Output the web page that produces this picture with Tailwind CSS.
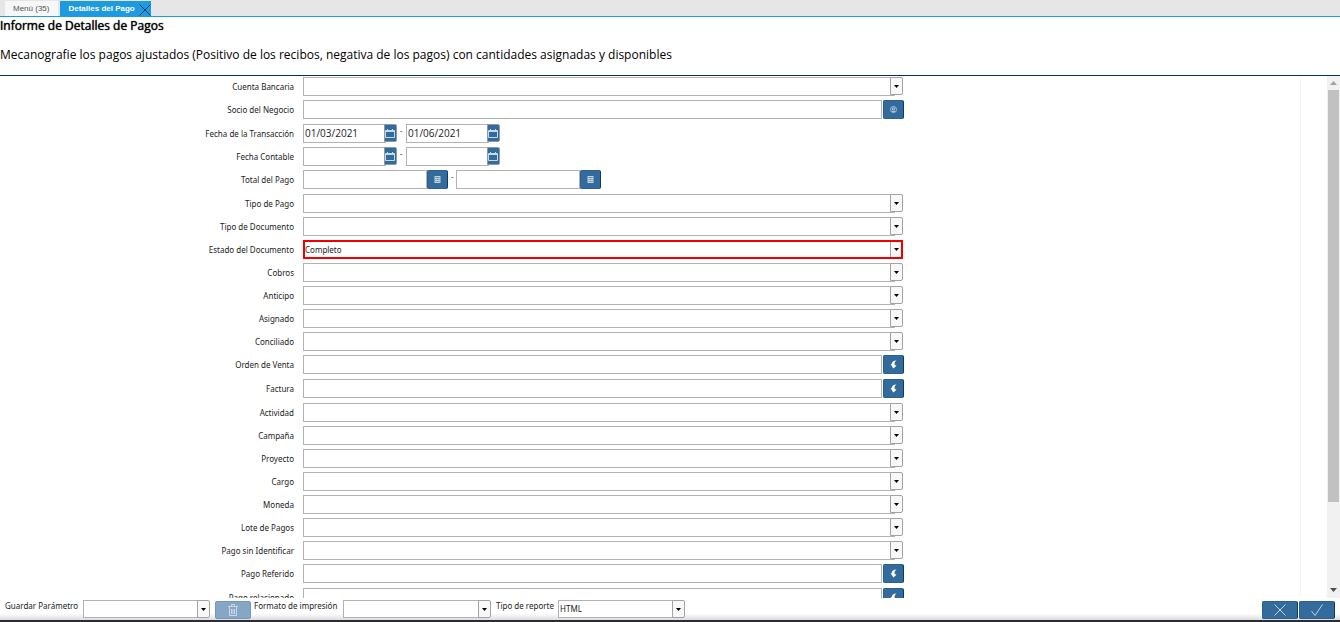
<!DOCTYPE html>
<html lang="es">
<head>
  <meta charset="UTF-8" />
  <meta name="viewport" content="width=device-width, initial-scale=1.0" />
  <title>Informe de Detalles de Pagos</title>
  <script src="https://cdn.jsdelivr.net/npm/@tailwindcss/browser@4"></script>
</head>
<body class="h-screen flex flex-col overflow-hidden bg-white text-black font-['Open_Sans',sans-serif]">
  <!-- Iconos -->
  <svg class="hidden">
    <symbol id="i-x" viewBox="0 0 12 12"><path d="M.5.5l11 11M11.5.5l-11 11" fill="none" stroke="currentColor" /></symbol>
    <symbol id="i-check" viewBox="0 0 12 12"><path d="M.5 7l3.500 4.500L11.500.5" fill="none" stroke="currentColor" /></symbol>
    <symbol id="i-flecha" viewBox="0 0 5 3"><path d="M0 0h5L2.500 3z" fill="currentColor" /></symbol>
    <symbol id="i-fecha" viewBox="0 0 11 11"><path d="M.5 2.500h9v7h-9zM.5 3.500h9M2.500 1v2M7.500 1v2" fill="none" stroke="currentColor" /></symbol>
    <symbol id="i-calc" viewBox="0 0 7 9"><path d="M.5 1h6v7h-6z" fill="currentColor" /><path d="M1.500 2.500h4M1.500 4.500h1M3 4.500h1M4.500 4.500h1M1.500 6.500h1M3 6.500h1M4.500 6.500h1" stroke="#336b9c" stroke-width=".7" /></symbol>
    <symbol id="i-socio" viewBox="0 0 7 9"><circle cx="3.500" cy="4.500" r="3" fill="none" stroke="currentColor" /><path d="M2.500 3h2v2h-2zM2 6.500h3" fill="none" stroke="currentColor" /></symbol>
    <symbol id="i-buscar" viewBox="0 0 7 9"><path d="M6.500.5C3.500.5 1.700 2 1.700 4.200L.5 4.300 3.400 8.500 6.500 5.800 4.700 5C4.200 3.300 4.800 1.700 6.500.5z" fill="currentColor" /></symbol>
    <symbol id="i-borrar" viewBox="0 0 10 12"><path d="M0 2.500h10M3.500 2V.5h3V2M1.500 3v8.500h7V3M3.500 5v5M5 5v5M6.500 5v5" fill="none" stroke="currentColor" /></symbol>
  </svg>

  <!-- Pestañas -->
  <nav class="h-[17px] shrink-0 flex items-end gap-0.5 pl-[5px] bg-[#e6e6e6] border-b border-[#1e9be0] font-['Liberation_Sans',sans-serif] text-[8px] leading-[15px]">
    <a href="#" class="h-[15px] pl-2 pr-[9px] bg-[#f7f7f7] text-[#555]">Menú (35)</a>
    <a href="#" class="h-[15px] pl-2 flex items-center gap-1 bg-[#1e9be0] text-white font-bold">Detalles del Pago
      <svg class="size-3 mt-0.5 text-[#0c3a66]"><use href="#i-x" /></svg>
    </a>
  </nav>

  <!-- Encabezado -->
  <header class="h-[59px] shrink-0 border-b border-[#03305c] text-[12px] leading-[17px]">
    <h1 class="font-medium [text-shadow:0_0_1px_#000]">Informe de Detalles de Pagos</h1>
    <p class="mt-3">Mecanografie los pagos ajustados (Positivo de los recibos, negativa de los pagos) con cantidades asignadas y disponibles</p>
  </header>

  <!-- Parámetros -->
  <main class="flex-1 min-h-0 flex">
    <form class="flex-1 overflow-y-auto [scrollbar-width:none] pt-px">
      <div id="parametros" class="mr-[26px] border-r border-[#f5f5f5]"></div>
    </form>
    <div class="w-[13px] flex flex-col items-center bg-[#f1f1f1]">
      <svg class="w-[7px] h-[14px] shrink-0 text-[#a3a3a3]" viewBox="0 0 7 14"><path d="M0 9h7L3.500 5z" fill="currentColor" /></svg>
      <div class="w-[11px] h-[79%] bg-[#c1c1c1]"></div>
      <svg class="w-[7px] h-4 mt-auto text-[#505050]" viewBox="0 0 7 16"><path d="M0 6h7L3.500 10z" fill="currentColor" /></svg>
    </div>
  </main>

  <!-- Barra inferior -->
  <footer class="h-6 shrink-0 flex items-start pt-0.5 px-[5px] border-b-2 border-[#2c2c30] bg-linear-to-b from-white from-70% to-[#dcdcdc] font-['Noto_Sans',sans-serif] text-[8px] leading-3 text-[#222]">
    <label for="guardar" class="w-[78px] whitespace-nowrap">Guardar Parámetro</label>
    <div class="relative w-[127px]">
      <select id="guardar" class="block w-[115px] h-[18px] appearance-none bg-white border border-[#b3b3b3]"><option></option></select>
      <span class="absolute right-0 top-0 w-[13px] h-[18px] flex items-center justify-center bg-[#f8f8f8] border border-[#a3a3a3] rounded-r-xs pointer-events-none"><svg class="w-[5px] h-[3px] text-black"><use href="#i-flecha" /></svg></span>
    </div>
    <button type="button" aria-label="Borrar" disabled class="w-9 h-[18px] mt-px ml-[5px] flex items-center justify-center rounded-xs bg-[#85a6c4] border border-[#7297b8] text-[#c8d8e6]"><svg class="w-[10px] h-3"><use href="#i-borrar" /></svg></button>
    <label for="formato" class="w-[89px] ml-[3px] whitespace-nowrap">Formato de impresión</label>
    <div class="relative w-[148px]">
      <select id="formato" class="block w-[136px] h-[18px] appearance-none bg-white border border-[#b3b3b3]"><option></option></select>
      <span class="absolute right-0 top-0 w-[13px] h-[18px] flex items-center justify-center bg-[#f8f8f8] border border-[#a3a3a3] rounded-r-xs pointer-events-none"><svg class="w-[5px] h-[3px] text-black"><use href="#i-flecha" /></svg></span>
    </div>
    <label for="reporte" class="w-[62px] ml-[5px] whitespace-nowrap">Tipo de reporte</label>
    <div class="relative w-[127px]">
      <select id="reporte" class="block w-[115px] h-[18px] px-px appearance-none bg-white border border-[#b3b3b3]"><option>HTML</option></select>
      <span class="absolute right-0 top-0 w-[13px] h-[18px] flex items-center justify-center bg-[#f8f8f8] border border-[#a3a3a3] rounded-r-xs pointer-events-none"><svg class="w-[5px] h-[3px] text-black"><use href="#i-flecha" /></svg></span>
    </div>
    <div class="ml-auto mt-px flex gap-px text-[#c2d3e2]">
      <button type="button" aria-label="Cancelar" class="w-9 h-[18px] flex items-center justify-center rounded-xs bg-[#336b9c] border border-[#2a5f8f] border-r-[#0c3a66]"><svg class="size-3"><use href="#i-x" /></svg></button>
      <button type="button" aria-label="Aceptar" class="w-9 h-[18px] flex items-center justify-center rounded-xs bg-[#336b9c] border border-[#2a5f8f] border-r-[#0c3a66]"><svg class="size-3"><use href="#i-check" /></svg></button>
    </div>
  </footer>

  <script>
    const campos = [
      ['Cuenta Bancaria', 'lista'],
      ['Socio del Negocio', 'buscar', 'i-socio'],
      ['Fecha de la Transacción', 'fecha', '01/03/2021', '01/06/2021'],
      ['Fecha Contable', 'fecha', '', ''],
      ['Total del Pago', 'monto'],
      ['Tipo de Pago', 'lista'],
      ['Tipo de Documento', 'lista'],
      ['Estado del Documento', 'lista', 'Completo'],
      ['Cobros', 'lista'],
      ['Anticipo', 'lista'],
      ['Asignado', 'lista'],
      ['Conciliado', 'lista'],
      ['Orden de Venta', 'buscar', 'i-buscar'],
      ['Factura', 'buscar', 'i-buscar'],
      ['Actividad', 'lista'],
      ['Campaña', 'lista'],
      ['Proyecto', 'lista'],
      ['Cargo', 'lista'],
      ['Moneda', 'lista'],
      ['Lote de Pagos', 'lista'],
      ['Pago sin Identificar', 'lista'],
      ['Pago Referido', 'buscar', 'i-buscar'],
      ['Pago relacionado', 'buscar', 'i-buscar']
    ];

    function lista(id, valor) {
      const borde = valor
        ? 'w-full border-2 border-[#f00000]'
        : 'w-[calc(100%-8px)] border border-[#b3b3b3]';
      const boton = valor
        ? 'right-0.5 top-0.5 w-[11px] h-[15px] border-l'
        : 'right-0 top-0 w-[13px] h-[18px] border rounded-r-xs';
      return `<div class="relative w-full">
        <select id="${id}" class="block h-[19px] appearance-none bg-white font-['Noto_Sans',sans-serif] text-[8px] text-[#222] ${borde}"><option>${valor || ''}</option></select>
        <span class="absolute flex items-center justify-center bg-[#f8f8f8] border-[#a3a3a3] pointer-events-none ${boton}"><svg class="w-[5px] h-[3px] text-black"><use href="#i-flecha" /></svg></span>
      </div>`;
    }

    function boton(icono, clases) {
      return `<button type="button" aria-label="Abrir" class="w-[21px] h-[19px] shrink-0 flex items-center justify-center rounded-xs bg-[#336b9c] border border-[#2a5f8f] border-r-[#0c3a66] ${clases}"><svg class="w-[7px] h-[9px]"><use href="#${icono}" /></svg></button>`;
    }

    function buscar(id, icono) {
      return `<input id="${id}" type="text" class="flex-1 min-w-0 h-[19px] bg-white border border-[#b3b3b3]" />
        ${boton(icono, icono === 'i-socio' ? 'ml-px -mr-px text-[#a9c2d8]' : 'ml-px -mr-px text-white')}`;
    }

    function fecha(id, valor) {
      return `<div class="relative w-[94px]">
        <input id="${id}" type="text" aria-label="Fecha" value="${valor}" class="block w-[83px] h-[19px] px-px pb-0.5 bg-white border border-[#b3b3b3] text-[10px] text-[#222]" />
        <button type="button" aria-label="Calendario" class="absolute right-0 top-0 w-[13px] h-[18px] flex items-center justify-center bg-[#336b9c] border border-[#8c9aa8] rounded-r-xs text-[#c2dcee]"><svg class="size-[11px] shrink-0"><use href="#i-fecha" /></svg></button>
      </div>`;
    }

    function monto(id) {
      return `<input id="${id}" type="text" aria-label="Monto" class="w-[124px] h-[19px] bg-white border border-[#b3b3b3]" />${boton('i-calc', 'text-[#c2d3e2]')}`;
    }

    document.getElementById('parametros').innerHTML = campos.map(([etiqueta, tipo, a, b], i) => {
      const id = 'campo' + i;
      let control = '';
      if (tipo === 'lista') control = lista(id, a);
      if (tipo === 'buscar') control = buscar(id, a);
      if (tipo === 'fecha') control = fecha(id, a) + '<span class="w-[9px] pl-[3px] text-[8px] leading-3">-</span>' + fecha(id + 'b', b);
      if (tipo === 'monto') control = monto(id) + '<span class="w-2 pl-[3px] text-[8px] leading-3">-</span>' + monto(id + 'b');
      const alto = tipo === 'buscar' || tipo === 'monto' ? 'h-6' : 'h-[23px]';
      return `<div class="grid grid-cols-[303fr_600fr_397fr] ${alto}">
        <label for="${id}" class="pr-[9px] text-right font-['Noto_Sans',sans-serif] text-[8px] leading-[19px] text-[#222]">${etiqueta}</label>
        <div class="flex items-start">${control}</div>
      </div>`;
    }).join('');
  </script>
</body>
</html>
